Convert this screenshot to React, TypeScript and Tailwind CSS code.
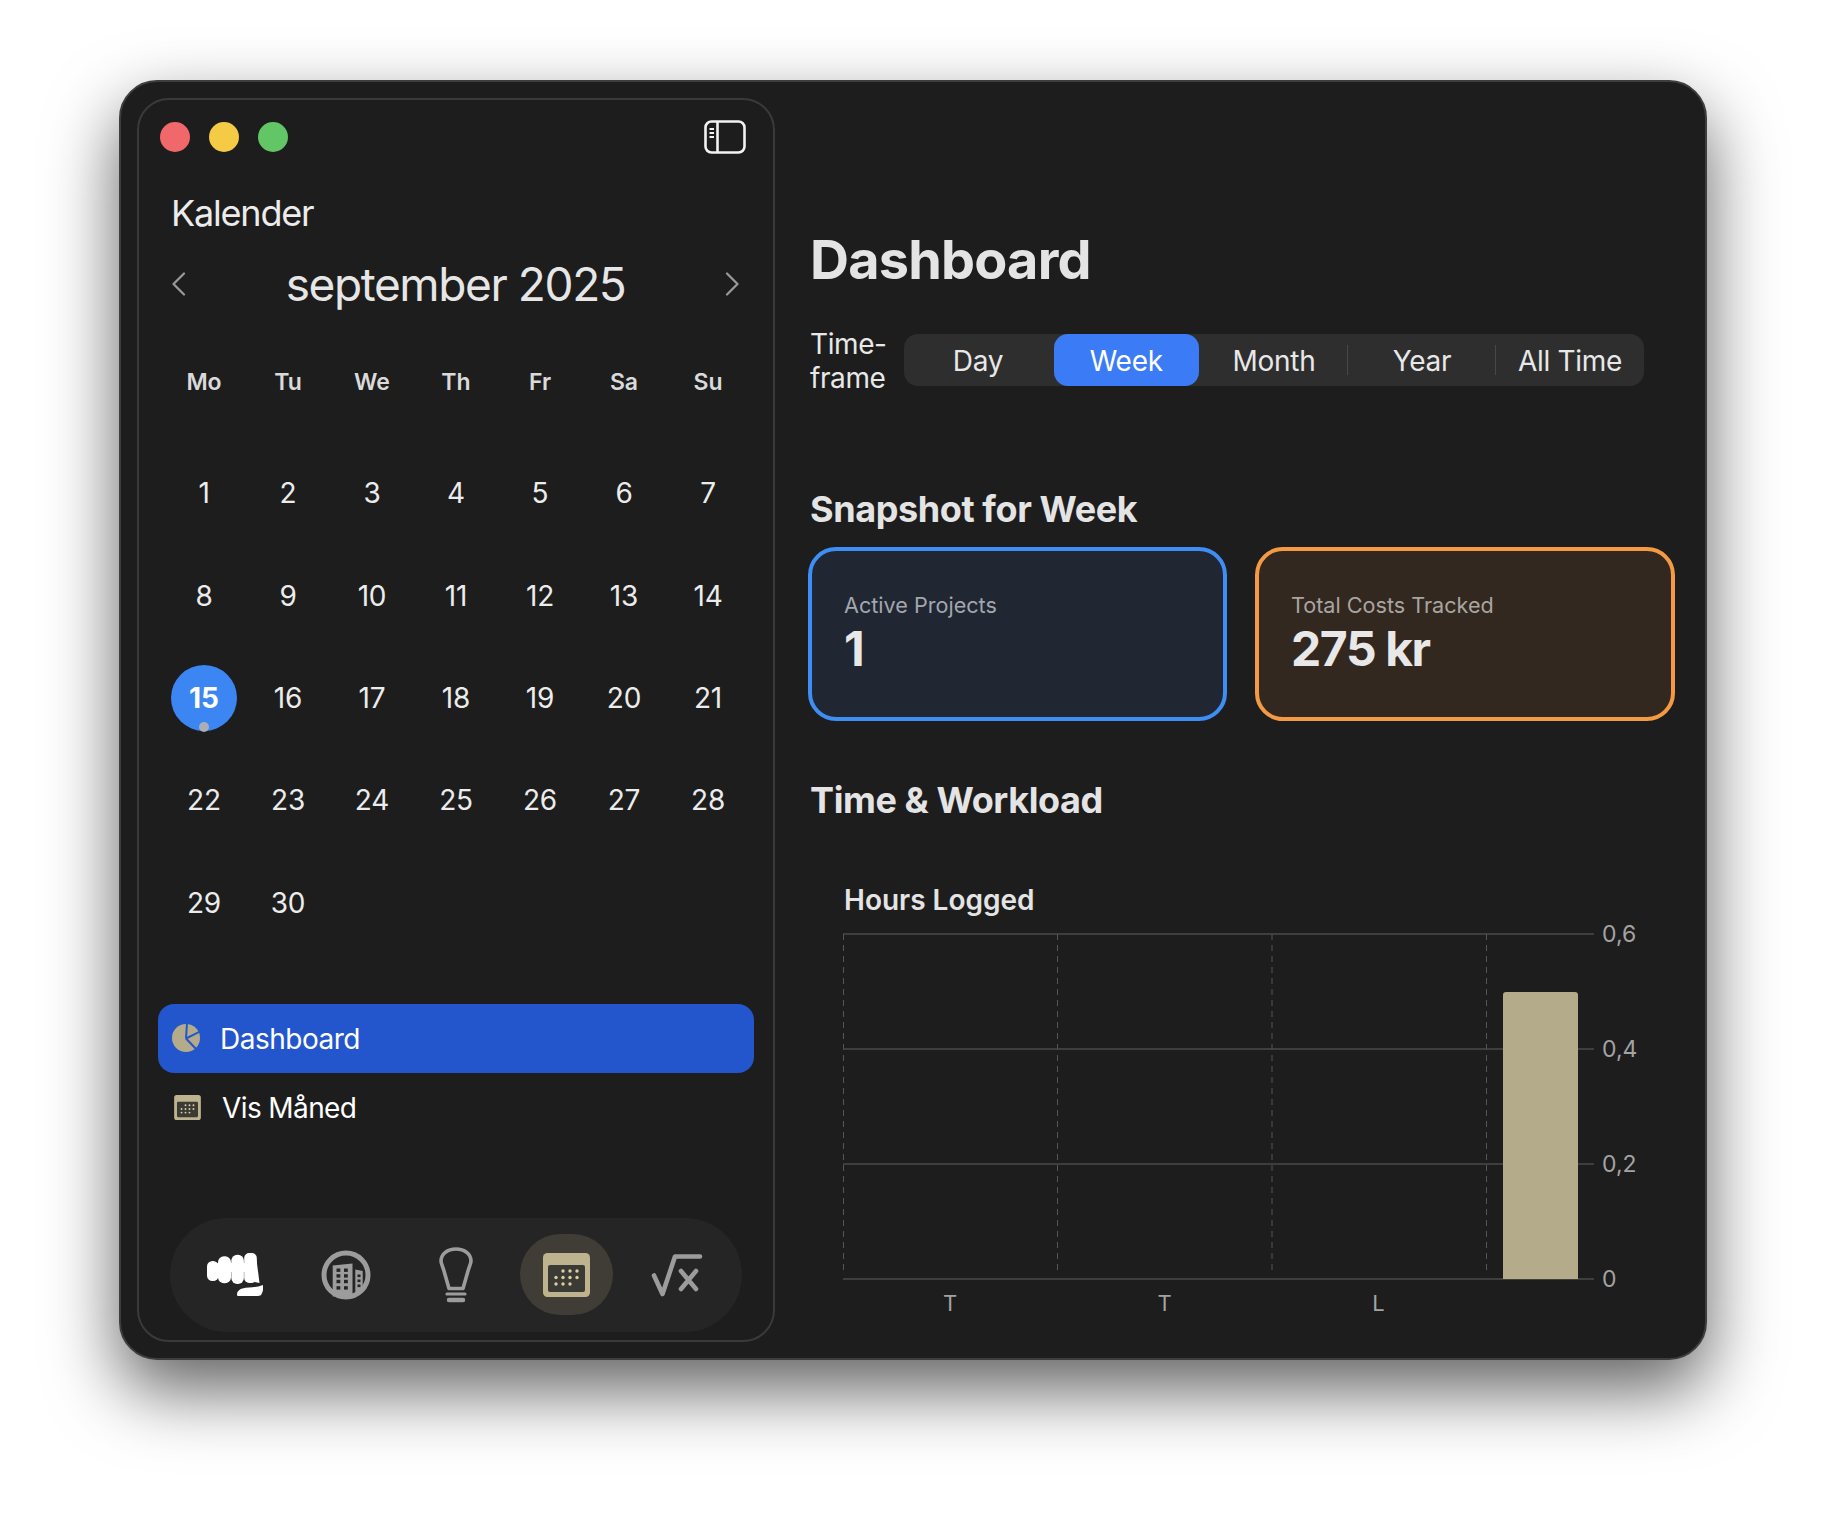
import React from 'react';

const weekdays = ['Mo', 'Tu', 'We', 'Th', 'Fr', 'Sa', 'Su'];
const days = Array.from({ length: 30 }, (_, i) => i + 1);
const tabs = ['Day', 'Week', 'Month', 'Year', 'All Time'];

function SidebarIcon() {
  return (
    <svg width="42" height="34" viewBox="0 0 42 34" fill="none" stroke="#f2f2f2" strokeWidth="2.6">
      <rect x="1.5" y="1.5" width="39" height="31" rx="6" />
      <path d="M13.5 2v30" />
      <path d="M5.5 9h4.5M5.5 13h4.5M5.5 17h4.5" strokeWidth="1.8" />
    </svg>
  );
}

function Chevron({ flip }: { flip?: boolean }) {
  return (
    <svg width="14" height="24" viewBox="0 0 14 24" fill="none" stroke="#9a9a9a" strokeWidth="2.2" strokeLinecap="round" strokeLinejoin="round">
      <path d={flip ? 'M2 1.5 12.5 12 2 22.5' : 'M12 1.5 1.5 12 12 22.5'} />
    </svg>
  );
}

function PieIcon() {
  return (
    <svg width="28" height="28" viewBox="0 0 28 28">
      <circle cx="14" cy="14" r="14" fill="#b3ab8a" />
      <path d="M14 14.500 15 -1M14 14.500 31 6M14 14.500 26 27" stroke="#2356cc" strokeWidth="2" fill="none" />
    </svg>
  );
}

function CalendarIcon({ size, height }: { size: number; height: number }) {
  const dots = [
    [40, 14], [54, 14], [68, 14],
    [26, 27], [40, 27], [54, 27], [68, 27],
    [26, 40], [40, 40], [54, 40],
  ];
  return (
    <svg width={size} height={height} viewBox="0 0 94 88">
      <rect width="94" height="88" rx="9" fill="#bdb38f" />
      <rect x="10" y="24" width="74" height="54" rx="4" fill="#3c3a34" />
      {dots.map(([x, y]) => (
        <circle key={`${x}-${y}`} cx={x} cy={y + 22} r="3.4" fill="#d9cea4" />
      ))}
    </svg>
  );
}

function FistIcon() {
  return (
    <svg width="56" height="44" viewBox="0 0 56 44" fill="#fff">
      <rect x="0" y="8" width="11.600" height="20" rx="5.500" />
      <rect x="11" y="3.300" width="13" height="27" rx="6" />
      <rect x="24.300" y="1.700" width="12.600" height="29.300" rx="6" />
      <rect x="37.200" y="0" width="12.600" height="30" rx="5" />
      <path d="M6 10h40v9H6z" />
      <path d="M46 5l3.500 1.500 3 23.500-5 -1z" />
      <path d="M30.500 43c-1.500-3 1-6.500 5-7.500 6-1.500 13-.5 20.500-3.500 .5 3 0 7.500-2 10-1 .8-2.500 1-4 1z" />
    </svg>
  );
}

function BuildingIcon() {
  const windows = [];
  for (const y of [20, 25.7, 31.3, 37.7]) {
    for (const x of [15.5, 23]) {
      windows.push(<rect key={`${x}-${y}`} x={x} y={y - 1.5} width="3.8" height="3.4" fill="#252525" />);
    }
  }
  return (
    <svg width="50" height="50" viewBox="0 0 50 50">
      <circle cx="25" cy="25" r="22" fill="#252525" stroke="#9c9c9c" strokeWidth="5" />
      <path d="M11.700 15.500 31.500 13.500v33h-19.800z" fill="#9c9c9c" />
      <path d="M34.300 19.500 41.700 21v19l-7.400 6z" fill="#9c9c9c" />
      {windows}
      <rect x="36.500" y="24.500" width="3" height="2.600" fill="#252525" />
      <rect x="36.500" y="29.500" width="3" height="2.600" fill="#252525" />
      <rect x="36.500" y="34.500" width="3" height="2.600" fill="#252525" />
    </svg>
  );
}

function BulbIcon() {
  return (
    <svg width="34" height="56" viewBox="0 0 34 56" fill="none" stroke="#9c9c9c" strokeWidth="3.6" strokeLinecap="round">
      <path d="M10 41.500 5 24C3.500 19 2 16.500 2 14 2 7 8.500 2 17 2s15 5 15 12c0 2.500-1.500 5-3 10l-5 17.500z" strokeLinejoin="round" />
      <path d="M8 47h18" strokeWidth="3.200" />
      <path d="M10 53h14" strokeWidth="4.500" />
    </svg>
  );
}

function SqrtIcon() {
  return (
    <svg width="52" height="44" viewBox="0 0 52 44" fill="none" stroke="#9c9c9c" strokeWidth="4.6" strokeLinecap="round" strokeLinejoin="round">
      <path d="M3 22.500 11.500 41 24 3.500h25" />
      <path d="M30 18 45 36M45 18 30 36" />
    </svg>
  );
}

function HoursChart() {
  const gridY = [15, 130, 245, 360];
  const yLabels = ['0,6', '0,4', '0,2', '0'];
  return (
    <svg width="820" height="400" viewBox="0 0 820 400" className="font-[Inter]">
      {[0.5, 214.5, 429, 643.5].map((x) => (
        <path key={x} d={`M${x} 15V354`} stroke="#565656" strokeWidth="1" strokeDasharray="6 5" />
      ))}
      {gridY.map((y) => (
        <path key={y} d={`M0 ${y}H751`} stroke="#4a4a4a" strokeWidth="1.500" />
      ))}
      <path d="M660 360V76a3 3 0 0 1 3-3h69a3 3 0 0 1 3 3v284z" fill="#b3ab8a" />
      {gridY.map((y, i) => (
        <text key={y} x="759" y={y + 8} fontSize="23" fill="#a3a3a3">{yLabels[i]}</text>
      ))}
      {[[107, 'T'], [321.5, 'T'], [535.5, 'L']].map(([x, label]) => (
        <text key={x} x={x} y="392" fontSize="22" textAnchor="middle" fill="#a3a3a3">{label}</text>
      ))}
    </svg>
  );
}

export default function App() {
  return (
    <div className="min-h-screen bg-white pl-[119px] pt-[80px] font-[Inter]">
      <div className="flex h-[1280px] w-[1588px] rounded-[38px] border-2 border-[#3e3e3e] bg-[#1d1d1d] p-[16px] shadow-[0_30px_70px_rgba(0,0,0,0.62)]">
        <aside className="flex w-[638px] shrink-0 flex-col rounded-[32px] border-2 border-[#3a3a3a]">
          <div className="mt-[20px] flex h-[34px] items-center justify-between pl-[21px] pr-[27px]">
            <div className="flex gap-[19px]">
              <div className="h-[30px] w-[30px] rounded-full bg-[#f0686a]" />
              <div className="h-[30px] w-[30px] rounded-full bg-[#f5cb45]" />
              <div className="h-[30px] w-[30px] rounded-full bg-[#62c667]" />
            </div>
            <SidebarIcon />
          </div>

          <h1 className="ml-[32px] mt-[37px] text-[36px] leading-[44px] tracking-[-1.2px] text-[#ececec]">Kalender</h1>

          <div className="mt-[24px] flex h-[50px] items-center justify-between pl-[33px] pr-[34px]">
            <Chevron />
            <span className="text-[46px] leading-[50px] tracking-[-1.4px] text-[#e6e6e6]">september 2025</span>
            <Chevron flip />
          </div>

          <div className="mx-[23px] mt-[55px] grid grid-cols-7">
            {weekdays.map((d) => (
              <div key={d} className="flex h-[36px] items-center justify-center text-[23px] font-semibold text-[#dadada]">{d}</div>
            ))}
          </div>

          <div className="mx-[23px] mt-[42px] grid grid-cols-7 auto-rows-[102.4px]">
            {days.map((d) => (
              <div key={d} className="flex items-center justify-center">
                {d === 15 ? (
                  <div className="relative flex h-[66px] w-[66px] items-center justify-center rounded-full bg-[#3c86f4] text-[28px] font-bold text-white">
                    15
                    <span className="absolute bottom-[-1px] h-[10px] w-[10px] rounded-full bg-[#a9aeb8]" />
                  </div>
                ) : (
                  <span className="text-[28px] tracking-[-0.2px] text-[#ececec]">{d}</span>
                )}
              </div>
            ))}
          </div>

          <div className="mx-[19px] mt-[50px] flex h-[69px] items-center gap-[20px] rounded-[16px] bg-[#2356cc] pl-[14px] text-[28px] tracking-[-0.5px] text-white">
            <PieIcon />
            <span className="pt-[2px]">Dashboard</span>
          </div>
          <div className="mx-[19px] flex h-[69px] items-center gap-[21px] pl-[16px] text-[28px] tracking-[-0.6px] text-white">
            <CalendarIcon size={27} height={25} />
            <span className="pt-[2px]">Vis Måned</span>
          </div>

          <div className="mx-[31px] mt-[76px] flex h-[114px] items-center rounded-[58px] bg-[#252525] pl-[37px]">
            <FistIcon />
            <div className="ml-[58px]"><BuildingIcon /></div>
            <div className="ml-[68px]"><BulbIcon /></div>
            <div className="ml-[47px] flex h-[81px] w-[93px] items-center justify-center rounded-full bg-[#403d36]">
              <CalendarIcon size={47} height={44} />
            </div>
            <div className="ml-[38px]"><SqrtIcon /></div>
          </div>
        </aside>

        <main className="flex-1 pl-[33px] pt-[130px]">
          <h2 className="ml-[2px] text-[54px] font-bold leading-[64px] tracking-[-0.8px] text-[#e4e4e4]">Dashboard</h2>

          <div className="ml-[2px] mt-[42px] flex h-[52px] items-center">
            <div className="w-[94px] pt-[2px] text-[28px] leading-[34px] tracking-[-0.4px] text-[#e8e8e8]">
              <div>Time-</div>
              <div>frame</div>
            </div>
            <div className="flex h-[52px] w-[740px] rounded-[14px] bg-[#2e2e2e] text-[28px] tracking-[-0.3px]">
              {tabs.map((t, i) => (
                <div key={t} className="relative flex-1">
                  <div className={t === 'Week' ? 'ml-[1.5px] mr-[1px] flex h-full items-center justify-center rounded-[14px] bg-[#3b7bf6] pt-[2px] text-white' : 'flex h-full items-center justify-center pt-[2px] text-[#e8e8e8]'}>{t}</div>
                  {i > 1 && i < 4 && <span className="absolute right-0 top-[11px] h-[30px] w-px bg-[#474747]" />}
                </div>
              ))}
            </div>
          </div>

          <h3 className="ml-[2px] mt-[101px] text-[36px] font-bold leading-[44px] tracking-[-0.4px] text-[#e4e4e4]">Snapshot for Week</h3>

          <div className="mt-[16px] flex gap-[28px]">
            <div className="flex h-[174px] w-[419px] flex-col rounded-[28px] border-4 border-[#3f8ef5] bg-[#202733] pl-[32px] pt-[40px]">
              <div className="text-[21.6px] leading-[28px] text-[#a3a6ad]">Active Projects</div>
              <div className="mt-[2px] text-[48px] font-bold leading-[56px] text-[#e8e8e8]">1</div>
            </div>
            <div className="flex h-[174px] w-[420px] flex-col rounded-[28px] border-4 border-[#f59a42] bg-[#332820] pl-[32px] pt-[40px]">
              <div className="text-[21.6px] leading-[28px] text-[#a8a5a1]">Total Costs Tracked</div>
              <div className="mt-[2px] text-[48px] font-bold leading-[56px] tracking-[-1.4px] text-[#e8e8e8]">275 kr</div>
            </div>
          </div>

          <h3 className="ml-[2px] mt-[57px] text-[36px] font-bold leading-[44px] tracking-[-0.4px] text-[#e4e4e4]">Time &amp; Workload</h3>

          <div className="ml-[36px] mt-[60px] text-[28px] font-semibold leading-[36px] text-[#e4e4e4]">Hours Logged</div>
          <div className="ml-[35px] mt-[1px]">
            <HoursChart />
          </div>
        </main>
      </div>
    </div>
  );
}
